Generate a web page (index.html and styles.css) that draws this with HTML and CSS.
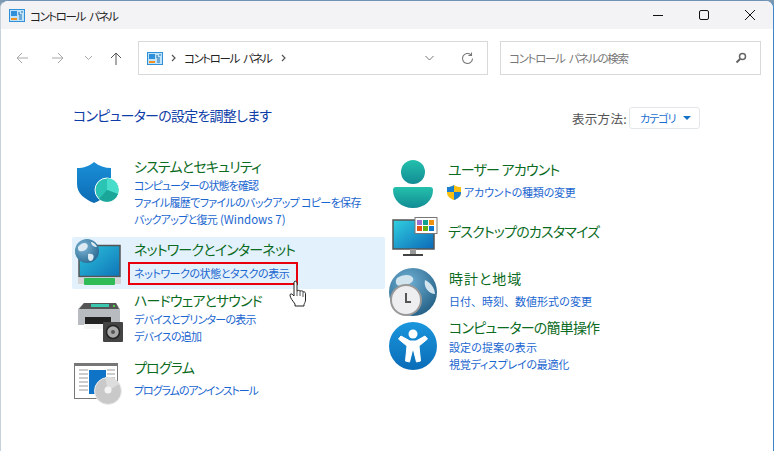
FILE: index.html
```html
<!DOCTYPE html>
<html lang="ja">
<head>
<meta charset="utf-8">
<title>コントロール パネル</title>
<link rel="stylesheet" href="styles.css">
</head>
<body>
<div class="window">
  <header class="titlebar">
    <svg class="cp-icon" width="16" height="13" viewBox="0 0 16 13"><rect x=".5" y=".5" width="15" height="12" fill="#bfe4fa" stroke="#2f8fd8"/><rect x="2" y="2" width="6" height="5" fill="#2f8fd8"/><rect x="2" y="9" width="6" height="2" fill="#f09020"/><path d="M10 3v3h3M10 8h3M10 10h3M13 2v2" stroke="#1c6fb0" fill="none"/></svg>
    <span class="title-text">コントロール パネル</span>
    <div class="win-btns">
      <svg width="46" height="28" viewBox="0 0 46 28"><path d="M18 14.500h10" stroke="#111"/></svg>
      <svg width="46" height="28" viewBox="0 0 46 28"><rect x="18.500" y="9.500" width="9" height="9" rx="1.500" fill="none" stroke="#111"/></svg>
      <svg width="46" height="28" viewBox="0 0 46 28"><path d="M18 9l10 10M28 9l-10 10" stroke="#111"/></svg>
    </div>
  </header>
  <nav class="toolbar">
    <svg class="nav" width="13" height="12" viewBox="0 0 13 12"><path d="M12 6H1M6 1L1 6l5 5" fill="none" stroke="#a8a8a8"/></svg>
    <svg class="nav n2" width="13" height="12" viewBox="0 0 13 12"><path d="M1 6h11M7 1l5 5-5 5" fill="none" stroke="#a8a8a8"/></svg>
    <svg class="nav n3" width="9" height="6" viewBox="0 0 9 6"><path d="M1 1l3.500 3.500L8 1" fill="none" stroke="#a8a8a8"/></svg>
    <svg class="nav n4" width="12" height="13" viewBox="0 0 12 13"><path d="M6 13V1M1 6l5-5 5 5" fill="none" stroke="#555"/></svg>
    <div class="address">
      <svg width="16" height="13" viewBox="0 0 16 13"><rect x=".5" y=".5" width="15" height="12" fill="#bfe4fa" stroke="#2f8fd8"/><rect x="2" y="2" width="6" height="5" fill="#2f8fd8"/><rect x="2" y="9" width="6" height="2" fill="#f09020"/><path d="M10 3v3h3M10 8h3M10 10h3M13 2v2" stroke="#1c6fb0" fill="none"/></svg>
      <svg class="crumb first" width="5" height="8" viewBox="0 0 5 8"><path d="M1 1l3 3-3 3" fill="none" stroke="#555" stroke-width="1.200"/></svg>
      <span class="addr-text">コントロール パネル</span>
      <svg class="crumb" width="5" height="8" viewBox="0 0 5 8"><path d="M1 1l3 3-3 3" fill="none" stroke="#555" stroke-width="1.200"/></svg>
      <svg class="addr-chev" width="9" height="6" viewBox="0 0 9 6"><path d="M.5 1l4 4 4-4" fill="none" stroke="#777"/></svg>
      <svg class="addr-refresh" width="13" height="13" viewBox="0 0 13 13"><path d="M11.500 6.500a5 5 0 1 1-1.600-3.700M10.500 .5v3h-3" fill="none" stroke="#777" stroke-width="1.100"/></svg>
    </div>
    <div class="search">
      <span>コントロール パネルの検索</span>
      <svg width="12" height="12" viewBox="0 0 12 12"><circle cx="7.500" cy="4.500" r="3" fill="none" stroke="#666" stroke-width="1.500"/><path d="M5.300 6.700L1.500 10.500" stroke="#666" stroke-width="2"/></svg>
    </div>
  </nav>
  <main class="content">
    <div class="head">
      <h1>コンピューターの設定を調整します</h1>
      <div class="viewby">
        <span>表示方法:</span>
        <div class="viewbtn">カテゴリ<i class="tri"></i></div>
      </div>
    </div>
    <div class="columns">
      <div class="col left">
        <section class="cat sys">
          <svg class="ico" width="46" height="46" viewBox="0 0 46 46"><defs><linearGradient id="sh" x1="0" y1="0" x2="0" y2="1"><stop offset="0" stop-color="#1a8fd8"/><stop offset="1" stop-color="#0c6cb4"/></linearGradient></defs><path d="M20 1c5 4 11 6 17 6v16c0 9-7 15-17 19C10 38 3 32 3 23V7c7 0 12-2 17-6z" fill="url(#sh)"/><circle cx="33" cy="29" r="12" fill="#2bc4b4" stroke="#fff" stroke-width="1"/><path d="M33 29V17a12 12 0 0 1 11 16z" fill="#48dccb"/><path d="M33 29l11 4a12 12 0 0 1-19 5z" fill="#1aa698"/></svg>
          <div class="txt">
            <h2>システムとセキュリティ</h2>
            <a class="ls-tight">コンピューターの状態を確認</a>
            <a class="ls-file">ファイル履歴でファイルのバックアップ コピーを保存</a>
            <a>バックアップと復元<span class="latin">(Windows 7)</span></a>
          </div>
        </section>
        <section class="cat net">
          <svg class="ico" width="48" height="48" viewBox="0 0 48 48"><defs><linearGradient id="nm" x1="0" y1="0" x2="1" y2="1"><stop offset="0" stop-color="#2cc4dc"/><stop offset="1" stop-color="#0f74b8"/></linearGradient><radialGradient id="ng" cx=".35" cy=".35" r=".8"><stop offset="0" stop-color="#7fb8d8"/><stop offset="1" stop-color="#1f5f88"/></radialGradient></defs><rect x="5" y="6.500" width="41" height="31" fill="url(#nm)" stroke="#555" stroke-width="1.500"/><rect x="4" y="39" width="43" height="6" fill="#d5d5d5"/><rect x="10" y="39" width="31" height="7" rx="1" fill="#2fbb55"/><circle cx="13" cy="12" r="12" fill="url(#ng)"/><path d="M4 8c3-4 7-5 9-3s0 6-4 7-5 0-5-4zM14 15c4-1 7 1 5 5s-5 1-5-1zM17 3c2 0 5 2 6 5-3 0-6-2-6-5z" fill="#dcebf3"/></svg>
          <div class="txt">
            <h2>ネットワークとインターネット</h2>
            <a class="mark">ネットワークの状態とタスクの表示</a>
          </div>
          <svg class="hand" width="18" height="28" viewBox="0 0 18 28"><path d="M5 2c1-1.500 3-1 3 1v8l1-.5c1-.5 2 0 2 .5l1 0c1-.5 2 0 2 1 1-.5 2.500 0 2.500 1.500V20c0 2-1 3-1.500 4.500v1.500H6v-2C4 21 1 18 1 15c0-1.500 2-1.500 3 0l1 1V2z" fill="#fff" stroke="#222"/><path d="M8 11v5M11 11v5M14 12v5" stroke="#555" fill="none"/></svg>
        </section>
        <section class="cat hw">
          <svg class="ico" width="46" height="46" viewBox="0 0 46 46"><path d="M6 6h32l4 6v16H0V12z" fill="#b8bcc0"/><path d="M6 6h32l3 6H1z" fill="#555"/><rect x="13" y="7" width="18" height="3" fill="#3ac8b0"/><circle cx="36" cy="9" r="1" fill="#5f5"/><rect x="7" y="20" width="26" height="12" fill="#222"/><rect x="6" y="27" width="28" height="5" fill="#f4f4f4"/><rect x="25" y="25" width="20" height="20" rx="1" fill="#444"/><circle cx="35" cy="35" r="6.500" fill="#aaa" stroke="#222" stroke-width="1.500"/><circle cx="35" cy="35" r="2" fill="#555"/></svg>
          <div class="txt">
            <h2>ハードウェアとサウンド</h2>
            <a>デバイスとプリンターの表示</a>
            <a>デバイスの追加</a>
          </div>
        </section>
        <section class="cat prog">
          <svg class="ico" width="48" height="48" viewBox="0 0 48 48"><rect x=".5" y="1.500" width="43" height="35" fill="#fff" stroke="#777"/><rect x="0" y="1" width="44" height="3" fill="#777"/><rect x="15" y="8" width="17" height="24" fill="#0f73c8"/><path d="M5 8h9M5 12h9M5 16h9M5 20h9M5 24h9M5 28h9M33 8h8M33 12h8M33 16h8" stroke="#999"/><circle cx="34" cy="29" r="13.500" fill="#c9c9c9" stroke="#eee"/><path d="M34 29l11-7a14 14 0 0 0-14-7z" fill="#ddd"/><circle cx="34" cy="28" r="3.500" fill="#f4f4f4"/></svg>
          <div class="txt">
            <h2>プログラム</h2>
            <a class="gap ls-prog">プログラムのアンインストール</a>
          </div>
        </section>
      </div>
      <div class="col right">
        <section class="rcat user">
          <svg class="ico" width="40" height="48" viewBox="0 0 40 48"><defs><linearGradient id="us" x1="0" y1="0" x2="0" y2="1"><stop offset="0" stop-color="#24c0ac"/><stop offset="1" stop-color="#128c94"/></linearGradient></defs><circle cx="20" cy="12" r="12" fill="url(#us)"/><path d="M3 27h34c2 0 3 1 3 3 0 10-8 18-20 18S0 40 0 30c0-2 1-3 3-3z" fill="url(#us)"/></svg>
          <div class="txt">
            <h2>ユーザー アカウント</h2>
            <a class="shielded"><svg width="14" height="15" viewBox="0 0 14 15"><path d="M7 0c2 1.500 4 2 7 2v6c0 3-3 5.500-7 7-4-1.500-7-4-7-7V2c3 0 5-.5 7-2z" fill="#f8c010"/><path d="M7 0v7H0V2c3 0 5-.5 7-2zM7 7h7v1c0 3-3 5.500-7 7z" fill="#1a7fd0"/></svg>アカウントの種類の変更</a>
          </div>
        </section>
        <section class="rcat desk">
          <svg class="ico" width="46" height="42" viewBox="0 0 46 42"><defs><linearGradient id="dk" x1="0" y1="0" x2="1" y2="1"><stop offset="0" stop-color="#30d0e0"/><stop offset="1" stop-color="#0c68b8"/></linearGradient></defs><rect x="1" y="3" width="41" height="29" fill="url(#dk)" stroke="#555" stroke-width="1.500"/><rect x="18" y="32" width="6" height="5" fill="#999"/><rect x="11" y="37" width="20" height="2" fill="#444"/><rect x="23" y=".5" width="22" height="16" fill="#fff" stroke="#777"/><rect x="25" y="3" width="5" height="5" fill="#9c70d0"/><rect x="31" y="3" width="5" height="5" fill="#10a090"/><rect x="37" y="3" width="5" height="5" fill="#f09010"/><rect x="25" y="9" width="5" height="5" fill="#e85010"/><rect x="31" y="9" width="5" height="5" fill="#60b010"/><rect x="37" y="9" width="5" height="5" fill="#0f78d0"/></svg>
          <div class="txt"><h2>デスクトップのカスタマイズ</h2></div>
        </section>
        <section class="rcat clock">
          <svg class="ico" width="48" height="48" viewBox="0 0 48 48"><defs><radialGradient id="cg" cx=".4" cy=".3" r=".8"><stop offset="0" stop-color="#6fb0d4"/><stop offset="1" stop-color="#1f5a80"/></radialGradient></defs><circle cx="24" cy="24" r="24" fill="url(#cg)"/><path d="M8 10c6-4 14-4 16 0s-6 8-12 8-6-5-4-8zM36 12c5 2 10 8 10 14-5 0-12-6-10-14z" fill="#d2e4ee"/><circle cx="17" cy="32" r="15" fill="#eeeef0" stroke="#999" stroke-width="2"/><path d="M17 25v9h5" fill="none" stroke="#555" stroke-width="2"/></svg>
          <div class="txt">
            <h2 class="kanji-title">時計と地域</h2>
            <a class="gap ls-date">日付、時刻、数値形式の変更</a>
          </div>
        </section>
        <section class="rcat acc">
          <svg class="ico" width="48" height="48" viewBox="0 0 48 48"><defs><linearGradient id="ac" x1="0" y1="0" x2="0" y2="1"><stop offset="0" stop-color="#1a96dc"/><stop offset="1" stop-color="#0a6cb8"/></linearGradient></defs><circle cx="24" cy="24" r="24" fill="url(#ac)"/><circle cx="24" cy="12" r="4.500" fill="#fff"/><path d="M12 14l9 5h6l9-5 2.500 3-8.500 7 1.500 15-4 1-3-12h-1l-3 12-4-1 1.500-15-8.500-7z" fill="#fff" stroke="#fff" stroke-linejoin="round"/></svg>
          <div class="txt">
            <h2>コンピューターの簡単操作</h2>
            <a class="ls-kanji">設定の提案の表示</a>
            <a class="ls-wide">視覚ディスプレイの最適化</a>
          </div>
        </section>
      </div>
    </div>
  </main>
</div>
</body>
</html>
```

FILE: styles.css
```css
* { box-sizing: border-box; margin: 0; padding: 0; }
html, body { width: 774px; height: 451px; overflow: hidden; background: #7d99b0; }
body { font-family: "Noto Sans CJK JP", "Noto Sans", sans-serif; font-feature-settings: "palt"; }
.window { width: 774px; height: 451px; background: #fff; border-radius: 8px 8px 0 0; border: 1px solid #8ba3b8; border-bottom: 0; border-left-color: #c8d2da; border-top-color: #6f93b4; border-right-color: #3f86c8; overflow: hidden; }
.titlebar { height: 28px; background: #f3f3f5; display: flex; align-items: center; padding-left: 8px; padding-top: 1px; }
.title-text { font-size: 11.500px; color: #222; margin-left: 5px; letter-spacing: -1.400px; word-spacing: 3px; white-space: nowrap; }
.win-btns { margin-left: auto; display: flex; margin-top: -1px; }
.toolbar { height: 34px; margin-top: 12px; display: flex; align-items: center; padding-left: 15px; }
.nav { flex: none; }
.n2 { margin-left: 22px; }
.n3 { margin-left: 20px; }
.n4 { margin-left: 17px; }
.address { width: 350px; height: 34px; margin-left: 16px; border: 1px solid #d9d9d9; display: flex; align-items: center; padding-left: 8px; margin-right: 12px; flex: none; }
.crumb.first { margin-left: 8px; }
.addr-text { font-size: 11.500px; color: #222; margin: 0 9px 0 8px; letter-spacing: -1.400px; word-spacing: 3px; white-space: nowrap; }
.addr-chev { margin-left: auto; }
.addr-refresh { margin-left: 27px; margin-right: 13px; }
.search { width: 261px; height: 34px; flex: none; border: 1px solid #d9d9d9; display: flex; align-items: center; justify-content: space-between; padding: 0 13px 0 8px; font-size: 11.500px; color: #777; }
.search span { letter-spacing: -1.300px; word-spacing: 3px; white-space: nowrap; }
.content { padding: 0 0 0 71px; }
.head { display: flex; justify-content: space-between; align-items: flex-start; padding-right: 73px; margin-top: 28px; height: 54px; }
h1 { font-size: 14px; font-weight: 400; color: #0e3da8; line-height: 24px; letter-spacing: -.75px; white-space: nowrap; margin-left: 1px; }
.viewby { display: flex; align-items: center; margin-top: 4px; font-size: 12.500px; color: #555; white-space: nowrap; letter-spacing: .3px; }
.viewbtn { width: 71px; height: 22px; margin-left: 2px; border: 1px solid #e4e7ea; border-radius: 3px; display: flex; align-items: center; padding-left: 10px; color: #1a6fd0; font-size: 11px; letter-spacing: -1px; }
.tri { margin-left: 8px; border: 4px solid transparent; border-top: 4px solid #1570c8; border-bottom: 0; width: 0; height: 0; }
.columns { display: flex; }
.col { display: flex; flex-direction: column; }
.left { width: 313px; }
.right { margin-left: 4px; }
.cat { display: flex; position: relative; }
.ico { flex: none; display: block; }
.txt { display: flex; flex-direction: column; }
h2 { font-size: 14px; font-weight: 400; color: #0b6b1e; line-height: 20px; white-space: nowrap; letter-spacing: -.8px; }
h2.kanji-title { letter-spacing: 1px; }
.txt a { font-size: 11px; color: #1a66d0; line-height: 17px; white-space: nowrap; display: flex; align-items: center; letter-spacing: -.75px; }
.txt .latin { letter-spacing: 0; font-size: 11.500px; margin-left: 3px; }
.txt .ls-tight { letter-spacing: -.9px; }
.txt .ls-file { letter-spacing: -.65px; white-space: pre; }
.txt .ls-prog { letter-spacing: -1.100px; }
.txt .mark { letter-spacing: -.45px; }
.txt .ls-date { letter-spacing: 0; font-feature-settings: normal; }
.txt .ls-kanji { letter-spacing: .1px; }
.txt .ls-wide { letter-spacing: -.25px; }
.sys { height: 80px; padding: 0 0 0 2px; }
.sys .ico { margin-top: 4px; }
.sys .txt { margin-left: 14px; margin-top: -1px; }
.sys h2 { margin-bottom: 1px; }
.net { height: 52px; background: #e3f1fc; border-radius: 2px; padding: 2px 0 0 2px; }
.net .txt { margin-left: 12px; }
.txt .mark { margin-top: 6px; }
.net .mark::before { content: ""; box-sizing: border-box; position: absolute; left: 56px; top: 25px; width: 170px; height: 23px; border: 2px solid #e8000c; }
.hand { position: absolute; left: 217px; top: 43px; z-index: 2; }
.hw { height: 69px; padding: 2px 0 0 6px; }
.hw .ico { margin-top: 6px; }
.hw .txt { margin-left: 10px; margin-top: -1px; }
.hw h2 { margin-bottom: 1px; }
.prog { height: 60px; padding: 0 0 0 2px; }
.prog .ico { margin-top: 4px; }
.prog .txt { margin-left: 12px; margin-top: -1px; }
.prog .gap { margin-top: 5px; }
.clock .gap { margin-top: 5px; }
.rcat { display: flex; }
.user { height: 60px; padding-left: 4px; }
.user .ico { margin-top: 3px; }
.user .txt { margin-left: 15px; margin-top: 2px; }
.shielded svg { margin-right: 3px; margin-left: -1px; }
.txt .shielded { margin-top: 5px; letter-spacing: -.2px; }
.desk { height: 51px; padding-left: 3px; }
.desk .txt { margin-left: 10px; margin-top: 4px; }
.clock { height: 54px; }
.clock .txt { margin-left: 12px; }
.acc .txt { margin-left: 12px; margin-top: -5px; }
.acc h2 { margin-bottom: 2px; }
```
